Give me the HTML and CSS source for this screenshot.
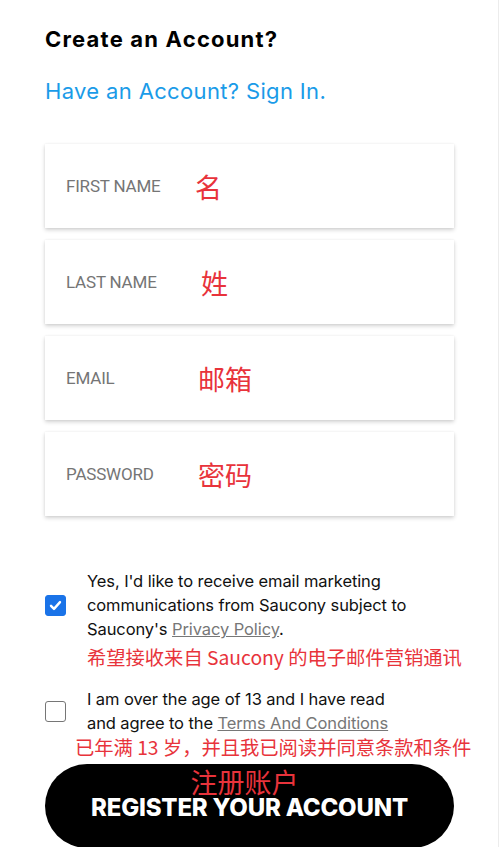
FILE: index.html
```html
<!DOCTYPE html>
<html lang="en">
<head>
  <meta charset="UTF-8">
  <meta name="viewport" content="width=device-width, initial-scale=1.0">
  <title>Create an Account</title>
  <link rel="stylesheet" href="styles.css">
</head>
<body>
<div class="page">
  <div class="form">
    <h2 class="title">Create an Account?</h2>
    <a class="signin" href="#">Have an Account? Sign In.</a>

    <div class="fields">
      <div class="field">
        <span class="label">FIRST NAME</span>
        <span class="zh zh-first">名</span>
      </div>
      <div class="field">
        <span class="label">LAST NAME</span>
        <span class="zh zh-last">姓</span>
      </div>
      <div class="field">
        <span class="label">EMAIL</span>
        <span class="zh zh-email">邮箱</span>
      </div>
      <div class="field">
        <span class="label">PASSWORD</span>
        <span class="zh zh-pass">密码</span>
      </div>
    </div>

    <div class="opt opt-mail">
      <span class="box checked">
        <svg viewBox="0 0 20 20" width="15" height="15"><path d="M4 10.5l4 4 8-9" fill="none" stroke="#fff" stroke-width="3.2" stroke-linecap="round" stroke-linejoin="round"/></svg>
      </span>
      <div class="opt-text">
        Yes, I'd like to receive email marketing communications from Saucony subject to Saucony's <a href="#">Privacy Policy</a>.
      </div>
    </div>
    <div class="zh-note note-mail">希望接收来自 Saucony 的电子邮件营销通讯</div>

    <div class="opt opt-age">
      <span class="box"></span>
      <div class="opt-text">
        I am over the age of 13 and I have read<br>and agree to the <a href="#">Terms And Conditions</a>
      </div>
    </div>
    <div class="zh-note note-age">已年满 13 岁，并且我已阅读并同意条款和条件</div>

    <button class="register">
      <span class="register-zh">注册账户</span>
      <span class="register-en">REGISTER YOUR ACCOUNT</span>
    </button>
  </div>
</div>
</body>
</html>
```

FILE: styles.css
```css
body {
  margin: 0;
  padding: 0;
  background: #fff;
  font-family: Inter, "Noto Sans CJK SC", sans-serif;
  color: #111;
}
.page {
  width: 499px;
  height: 847px;
  border-right: 1px solid #ececec;
  box-sizing: border-box;
  overflow: hidden;
}
.form {
  width: 409px;
  margin-left: 45px;
  padding-top: 24px;
}
.title {
  margin: 0;
  font-size: 22px;
  font-weight: 700;
  line-height: 30px;
  letter-spacing: 1.2px;
  color: #000;
}
.signin {
  display: block;
  margin-top: 22px;
  font-size: 22px;
  line-height: 30px;
  letter-spacing: 0.35px;
  color: #1a9be8;
  text-decoration: none;
}
.fields {
  display: flex;
  flex-direction: column;
  gap: 12px;
  margin-top: 38px;
}
.field {
  height: 84px;
  display: flex;
  align-items: center;
  padding-left: 21px;
  background: #fff;
  box-shadow: 0 2px 4px rgba(0,0,0,0.18), 0 0 2px rgba(0,0,0,0.06);
}
.label {
  font-family: Roboto, sans-serif;
  font-size: 17px;
  letter-spacing: -0.2px;
  color: #757575;
  width: 130px;
}
.zh {
  font-family: "Noto Sans CJK SC", sans-serif;
  font-size: 27px;
  color: #e8333b;
  line-height: 1;
}
.zh-first { margin-left: -1px; }
.zh-last { margin-left: 5px; }
.zh-email, .zh-pass { margin-left: 2px; }
.opt {
  display: flex;
  align-items: center;
  gap: 21px;
}
.opt-mail { margin-top: 53px; }
.opt-age { margin-top: 18px; }
.box {
  flex: none;
  width: 21px;
  height: 21px;
  box-sizing: border-box;
  border-radius: 3px;
  border: 1px solid #767676;
  display: flex;
  align-items: center;
  justify-content: center;
}
.box.checked {
  background: #1a73e8;
  border-color: #1a73e8;
}
.opt-text {
  font-size: 16.5px;
  line-height: 24px;
  letter-spacing: -0.1px;
  color: #111;
}
.opt-text a {
  color: #777;
  text-decoration: underline;
}
.zh-note {
  font-family: "Noto Sans CJK SC", sans-serif;
  font-size: 19.3px;
  line-height: 24px;
  color: #e8333b;
  white-space: nowrap;
}
.note-mail { margin-left: 42px; margin-top: 4px; }
.note-age { margin-left: 30px; margin-top: 0; }
.register {
  display: flex;
  flex-direction: column;
  align-items: center;
  width: 409px;
  height: 84px;
  margin-top: 5px;
  border: none;
  border-radius: 42px;
  background: #000;
  padding: 4px 0 0;
  cursor: pointer;
}
.register-zh {
  font-family: "Noto Sans CJK SC", sans-serif;
  font-size: 27px;
  line-height: 28px;
  color: #e8333b;
  margin-left: -10px;
}
.register-en {
  font-family: Inter, sans-serif;
  font-size: 24px;
  font-weight: 800;
  line-height: 24px;
  color: #fff;
  letter-spacing: -0.2px;
}
```
